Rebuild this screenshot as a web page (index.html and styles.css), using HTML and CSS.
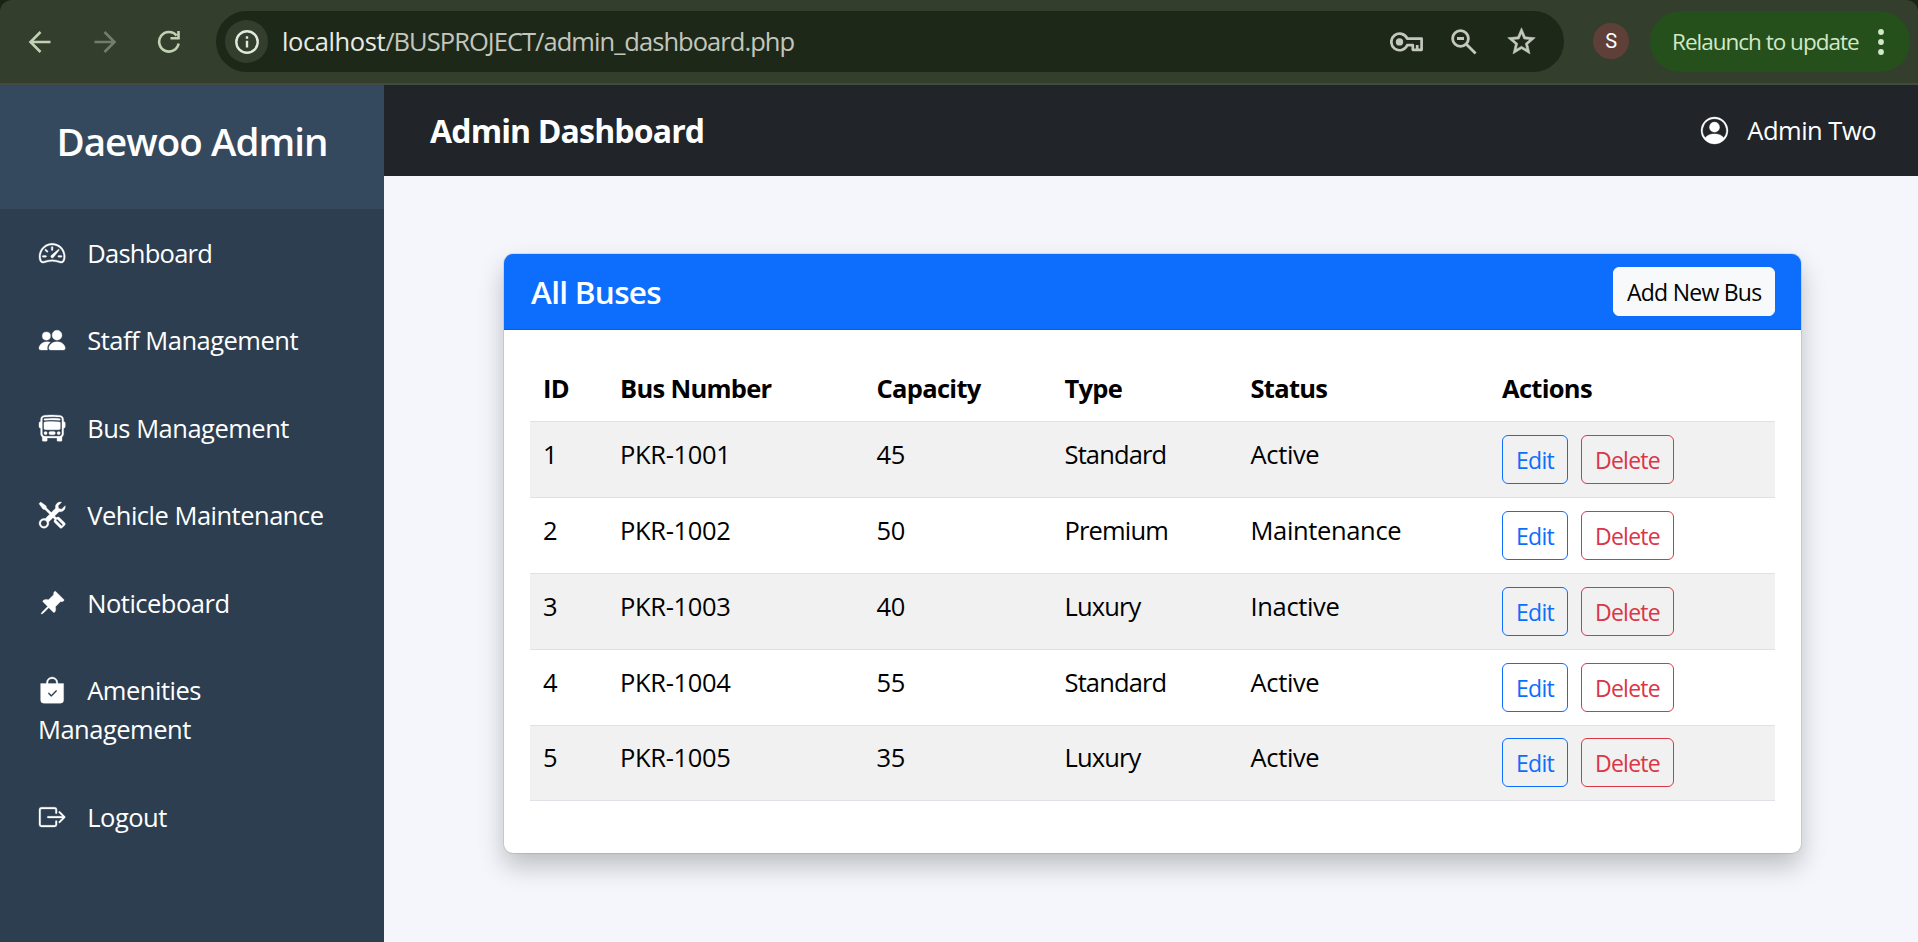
FILE: index.html
```html
<!DOCTYPE html>
<html lang="en">
<head>
<meta charset="utf-8">
<title>Admin Dashboard</title>
<link rel="stylesheet" href="styles.css">
</head>
<body>
<div class="browser">
  <div class="toolbar">
    <div class="nav-buttons">
      <svg class="nav-icon" viewBox="0 0 24 24"><path d="M22.5 12H3M12.5 2 2.5 12l10 10"/></svg>
      <svg class="nav-icon disabled" viewBox="0 0 24 24"><path d="M1.5 12H21M11.5 2l10 10-10 10"/></svg>
      <svg class="nav-icon" viewBox="0 0 24 24"><path d="M21.6 13.5A9.8 9.8 0 1 1 19.6 5.6M13.5 8.2H21.5V1"/></svg>
    </div>
    <div class="omnibox">
      <span class="site-info"><svg class="info-icon" viewBox="0 0 24 24"><circle cx="12" cy="12" r="10.7"/><path d="M12 10.8v6.6M12 6.2v2.6"/></svg></span>
      <span class="url"><span class="host">localhost</span>/BUSPROJECT/admin_dashboard.php</span>
      <svg class="key-icon" viewBox="0 0 34 20"><path d="M17.2 6.6A8.3 8.3 0 1 0 17.2 13.2H22.8V17.8H31.6V6.6Z"/><path d="M27.2 13v4.500"/><circle cx="9.5" cy="9.9" r="3.7"/></svg>
      <svg class="mag-icon" viewBox="0 0 26 26"><circle cx="9.5" cy="9.5" r="7.9"/><path d="M15.3 15.3 24.6 24.6M6 9.5h7"/></svg>
      <svg class="star-icon" viewBox="0 0 24 24"><path d="M22 9.24l-7.19-.62L12 2 9.19 8.63 2 9.24l5.46 4.73L5.82 21 12 17.27 18.18 21l-1.63-7.03L22 9.24zM12 15.4l-3.76 2.27 1-4.28-3.32-2.88 4.38-.38L12 6.1l1.71 4.04 4.38.38-3.32 2.88 1 4.28L12 15.4z"/></svg>
    </div>
    <span class="avatar">S</span>
    <div class="relaunch"><span class="relaunch-text">Relaunch to update</span><svg class="dots" viewBox="0 0 6 28"><circle cx="3" cy="4" r="2.9"/><circle cx="3" cy="14" r="2.9"/><circle cx="3" cy="24" r="2.9"/></svg></div>
  </div>
</div>
<div class="app">
  <aside class="sidebar">
    <h1 class="brand">Daewoo Admin</h1>
    <nav class="menu">
      <a class="item item-dashboard"><svg class="bi" viewBox="0 0 16 16"><path d="M8 4a.5.5 0 0 1 .5.5V6a.5.5 0 0 1-1 0V4.500A.5.5 0 0 1 8 4M3.732 5.732a.5.5 0 0 1 .707 0l.915.914a.5.5 0 1 1-.708.708l-.914-.915a.5.5 0 0 1 0-.707M2 10a.5.5 0 0 1 .5-.5h1.586a.5.5 0 0 1 0 1H2.500A.5.5 0 0 1 2 10m9.500 0a.5.5 0 0 1 .5-.5h1.500a.5.5 0 0 1 0 1H12a.5.5 0 0 1-.5-.5m.754-4.246a.39.39 0 0 0-.527-.02L7.547 9.310a.91.91 0 1 0 1.302 1.258l3.434-4.297a.39.39 0 0 0-.029-.518z"/><path fill-rule="evenodd" d="M0 10a8 8 0 1 1 15.547 2.661c-.442 1.253-1.845 1.602-2.932 1.250C11.309 13.488 9.475 13 8 13c-1.474 0-3.310.488-4.615.911-1.087.352-2.490.003-2.932-1.250A8 8 0 0 1 0 10m8-7a7 7 0 0 0-6.603 9.329c.203.575.923.876 1.680.63C4.397 12.533 6.358 12 8 12s3.604.532 4.923.96c.757.245 1.477-.056 1.680-.631A7 7 0 0 0 8 3"/></svg>Dashboard</a>
      <a class="item"><svg class="bi" viewBox="0 0 16 16"><path d="M7 14s-1 0-1-1 1-4 5-4 5 3 5 4-1 1-1 1zm4-6a3 3 0 1 0 0-6 3 3 0 0 0 0 6m-5.784 6A2.240 2.240 0 0 1 5 13c0-1.355.68-2.750 1.936-3.720A6.300 6.300 0 0 0 5 9c-4 0-5 3-5 4s1 1 1 1zM4.500 8a2.500 2.500 0 1 0 0-5 2.500 2.500 0 0 0 0 5"/></svg>Staff Management</a>
      <a class="item"><svg class="bi" viewBox="0 0 16 16"><path d="M5 11a1 1 0 1 1-2 0 1 1 0 0 1 2 0m8 0a1 1 0 1 1-2 0 1 1 0 0 1 2 0m-6-1a1 1 0 1 0 0 2h2a1 1 0 1 0 0-2zm1-6c-1.876 0-3.426.109-4.552.226A.5.5 0 0 0 3 4.723v3.554a.5.5 0 0 0 .448.497C4.574 8.891 6.124 9 8 9s3.426-.109 4.552-.226A.5.5 0 0 0 13 8.277V4.723a.5.5 0 0 0-.448-.497A44 44 0 0 0 8 4m0-1c-1.837 0-3.353.107-4.448.22a.5.5 0 1 1-.104-.994A44 44 0 0 1 8 2c1.876 0 3.426.109 4.552.226a.5.5 0 1 1-.104.994A43 43 0 0 0 8 3"/><path d="M15 8a1 1 0 0 0 1-1V5a1 1 0 0 0-1-1V2.640c0-1.188-.845-2.232-2.064-2.372A44 44 0 0 0 8 0C5.900 0 4.208.136 3.064.268 1.845.408 1 1.452 1 2.640V4a1 1 0 0 0-1 1v2a1 1 0 0 0 1 1v3.500c0 .818.393 1.544 1 2v2a.5.5 0 0 0 .5.5h2a.5.5 0 0 0 .5-.5V14h6v1.500a.5.5 0 0 0 .5.5h2a.5.5 0 0 0 .5-.5v-2c.607-.456 1-1.182 1-2zM8 1c2.056 0 3.710.134 4.822.261.676.078 1.178.66 1.178 1.379v8.860a1.500 1.500 0 0 1-1.500 1.500h-9A1.500 1.500 0 0 1 2 11.500V2.640c0-.72.502-1.301 1.178-1.379A43 43 0 0 1 8 1"/></svg>Bus Management</a>
      <a class="item"><svg class="bi" viewBox="0 0 16 16"><path d="M1 0 0 1l2.200 3.081a1 1 0 0 0 .815.419h.07a1 1 0 0 1 .708.293l2.675 2.675-2.617 2.654A3.003 3.003 0 0 0 0 13a3 3 0 1 0 5.878-.851l2.654-2.617.968.968-.305.914a1 1 0 0 0 .242 1.023l3.270 3.270a.997.997 0 0 0 1.414 0l1.586-1.586a.997.997 0 0 0 0-1.414l-3.270-3.270a1 1 0 0 0-1.023-.242L10.500 9.500l-.96-.96 2.680-2.643A3.005 3.005 0 0 0 16 3q0-.405-.102-.777l-2.140 2.141L12 4l-.364-1.757L13.777.102a3 3 0 0 0-3.675 3.680L7.462 6.460 4.793 3.793a1 1 0 0 1-.293-.707v-.071a1 1 0 0 0-.419-.814zm9.646 10.646a.5.5 0 0 1 .708 0l2.914 2.915a.5.5 0 0 1-.707.707l-2.915-2.914a.5.5 0 0 1 0-.708M3 11l.471.242.529.026.287.445.445.287.026.529L5 13l-.242.471-.026.529-.445.287-.287.445-.529.026L3 15l-.471-.242L2 14.732l-.287-.445L1.268 14l-.026-.529L1 13l.242-.471.026-.529.445-.287.287-.445.529-.026z"/></svg>Vehicle Maintenance</a>
      <a class="item"><svg class="bi" viewBox="0 0 16 16"><path d="M9.828.722a.5.5 0 0 1 .354.146l4.950 4.950a.5.5 0 0 1 0 .707c-.48.48-1.072.588-1.503.588-.177 0-.335-.018-.46-.039l-3.134 3.134a6 6 0 0 1 .16 1.013c.046.702-.032 1.687-.72 2.375a.5.5 0 0 1-.707 0l-2.829-2.828-3.182 3.182c-.195.195-1.219.902-1.414.707s.512-1.220.707-1.414l3.182-3.182-2.828-2.829a.5.5 0 0 1 0-.707c.688-.688 1.673-.767 2.375-.72a6 6 0 0 1 1.013.16l3.134-3.133a3 3 0 0 1-.04-.461c0-.43.108-1.022.589-1.503a.5.5 0 0 1 .353-.146"/></svg>Noticeboard</a>
      <a class="item"><svg class="bi" viewBox="0 0 16 16"><path fill-rule="evenodd" d="M10.500 3.500a2.500 2.500 0 0 0-5 0V4h5zm1 0V4H15v10a2 2 0 0 1-2 2H3a2 2 0 0 1-2-2V4h3.500v-.5a3.500 3.500 0 1 1 7 0m-.646 5.354a.5.5 0 0 0-.708-.708L7.500 10.793 6.354 9.646a.5.5 0 1 0-.708.708l1.500 1.500a.5.5 0 0 0 .708 0z"/></svg>Amenities<br>Management</a>
      <a class="item"><svg class="bi" viewBox="0 0 16 16"><path d="M10 12.500a.5.5 0 0 1-.5.5h-8a.5.5 0 0 1-.5-.5v-9a.5.5 0 0 1 .5-.5h8a.5.5 0 0 1 .5.5v2a.5.5 0 0 0 1 0v-2A1.500 1.500 0 0 0 9.500 2h-8A1.500 1.500 0 0 0 0 3.500v9A1.500 1.500 0 0 0 1.500 14h8a1.500 1.500 0 0 0 1.500-1.500v-2a.5.5 0 0 0-1 0z"/><path d="M15.854 8.354a.5.5 0 0 0 0-.708l-3-3a.5.5 0 0 0-.708.708L14.293 7.500H5.500a.5.5 0 0 0 0 1h8.793l-2.147 2.146a.5.5 0 0 0 .708.708z"/></svg>Logout</a>
    </nav>
  </aside>
  <div class="content">
    <header class="topbar">
      <span class="page-title">Admin Dashboard</span>
      <span class="user"><svg class="user-icon" viewBox="0 0 16 16"><path d="M11 6a3 3 0 1 1-6 0 3 3 0 0 1 6 0"/><path fill-rule="evenodd" d="M0 8a8 8 0 1 1 16 0A8 8 0 0 1 0 8m8-7a7 7 0 0 0-5.468 11.370C3.242 11.226 4.805 10 8 10s4.757 1.225 5.468 2.370A7 7 0 0 0 8 1"/></svg><span class="user-name">Admin Two</span></span>
    </header>
    <main class="main">
      <section class="card">
        <div class="card-header"><h2 class="card-title">All Buses</h2><button class="btn btn-light">Add New Bus</button></div>
        <div class="card-body">
          <table class="table">
            <colgroup><col class="c-id"><col class="c-number"><col class="c-capacity"><col class="c-type"><col class="c-status"><col></colgroup>
            <thead><tr><th>ID</th><th>Bus Number</th><th>Capacity</th><th>Type</th><th>Status</th><th>Actions</th></tr></thead>
            <tbody>
              <tr><td>1</td><td>PKR-1001</td><td>45</td><td class="type">Standard</td><td>Active</td><td><div class="actions"><button class="btn btn-edit">Edit</button><button class="btn btn-delete">Delete</button></div></td></tr>
              <tr><td>2</td><td>PKR-1002</td><td>50</td><td class="type">Premium</td><td>Maintenance</td><td><div class="actions"><button class="btn btn-edit">Edit</button><button class="btn btn-delete">Delete</button></div></td></tr>
              <tr><td>3</td><td>PKR-1003</td><td>40</td><td class="type">Luxury</td><td>Inactive</td><td><div class="actions"><button class="btn btn-edit">Edit</button><button class="btn btn-delete">Delete</button></div></td></tr>
              <tr><td>4</td><td>PKR-1004</td><td>55</td><td class="type">Standard</td><td>Active</td><td><div class="actions"><button class="btn btn-edit">Edit</button><button class="btn btn-delete">Delete</button></div></td></tr>
              <tr><td>5</td><td>PKR-1005</td><td>35</td><td class="type">Luxury</td><td>Active</td><td><div class="actions"><button class="btn btn-edit">Edit</button><button class="btn btn-delete">Delete</button></div></td></tr>
            </tbody>
          </table>
        </div>
      </section>
    </main>
  </div>
</div>
</body>
</html>
```
FILE: styles.css
```css
* { box-sizing: border-box; }
body {
  margin: 0;
  height: 942px;
  overflow: hidden;
  font-family: "Open Sans", "Noto Sans", sans-serif;
  font-size: 25.5px;
  line-height: 39.4px;
  letter-spacing: -0.4px;
}
h1, h2 { margin: 0; }

/* browser bar */
.browser { background: #1a2416; }
.toolbar {
  display: flex;
  align-items: center;
  height: 85px;
  padding: 0 8px 0 28px;
  background: #343e2d;
  border-bottom: 2px solid #434a3e;
  border-radius: 12px 12px 0 0;
}
.nav-buttons { display: flex; gap: 40.5px; width: 188px; }
.nav-icon { width: 24px; height: 24px; fill: none; stroke: #c0d2b2; stroke-width: 2.6; }
.nav-icon.disabled { stroke: #737d6b; }
.omnibox {
  display: flex;
  align-items: center;
  width: 1348px;
  height: 61px;
  padding: 0 26px 0 9px;
  border-radius: 31px;
  background: #1e2819;
}
.site-info {
  display: flex;
  align-items: center;
  justify-content: center;
  width: 43px;
  height: 43px;
  margin-right: 14px;
  border-radius: 50%;
  background: #343e2d;
}
.info-icon { width: 24px; height: 24px; fill: none; stroke: #e3e8de; stroke-width: 2.4; }
.url { flex: 1; color: #c3c6bd; white-space: nowrap; letter-spacing: -0.96px; }
.host { color: #e8ebe4; letter-spacing: -0.4px; }
.key-icon { width: 34px; height: 20px; margin-right: 27px; fill: none; stroke: #c3c8bd; stroke-width: 2.7; stroke-linejoin: round; }
.key-icon circle { fill: #c3c8bd; stroke: none; }
.mag-icon { width: 26px; height: 26px; margin-right: 28px; fill: none; stroke: #c3c8bd; stroke-width: 2.8; }
.star-icon { width: 33px; height: 33px; fill: #c3c8bd; stroke: #c3c8bd; stroke-width: .4; }
.avatar {
  width: 36px;
  height: 36px;
  margin: -1px 21px 0 29px;
  border-radius: 50%;
  background: #5f4038;
  color: #fff;
  font: 20px/36px Roboto, sans-serif;
  text-align: center;
}
.relaunch {
  display: flex;
  align-items: center;
  justify-content: space-between;
  width: 260px;
  height: 61px;
  padding: 0 26px 0 22px;
  border-radius: 31px;
  background: #25501b;
  color: #d2e8c8;
  font-size: 22.5px;
  letter-spacing: -1px;
  white-space: nowrap;
}
.dots { width: 6px; height: 28px; fill: #d2e8c8; }

/* page shell */
.app { display: flex; height: 857px; }
.sidebar { flex: none; width: 384px; background: #2c3e50; color: #fff; }
.brand {
  height: 124px;
  padding-top: 32px;
  background: #34495e;
  font-size: 38.5px;
  font-weight: 600;
  line-height: 48px;
  letter-spacing: -0.95px;
  text-align: center;
}
.menu { padding-top: 1px; }
.item { display: block; padding: 24px 38px; letter-spacing: -0.5px; }
.item-dashboard { letter-spacing: -0.75px; }
.bi {
  width: 26.25px;
  height: 26.25px;
  margin: 0 22.5px 0 .5px;
  vertical-align: -3.3px;
  fill: #fff;
  stroke: #fff;
  stroke-width: .2;
  overflow: visible;
}
.content { flex: 1; display: flex; flex-direction: column; background: #f4f6fb; }
.topbar {
  display: flex;
  align-items: center;
  justify-content: space-between;
  height: 91px;
  padding: 1px 42px 0 46px;
  background: #212529;
  color: #fff;
}
.page-title { font-size: 32px; font-weight: 700; letter-spacing: -0.85px; }
.user { display: flex; align-items: center; letter-spacing: -0.5px; }
.user-icon { width: 27px; height: 27px; margin: -2px 19px 0 0; fill: #fff; stroke: #fff; stroke-width: .2; overflow: visible; }

/* bus list */
.main { padding: 78px 117px 0 120px; }
.card {
  height: 599px;
  border-radius: 9px;
  background: #fff;
  box-shadow: 0 0 0 1px rgba(0, 0, 0, .09), 0 13px 26px rgba(0, 0, 0, .23);
}
.card-header {
  display: flex;
  align-items: center;
  justify-content: space-between;
  height: 76px;
  padding: 0 26px 0 27px;
  border-bottom: 1px solid #0b5ed7;
  border-radius: 9px 9px 0 0;
  background: #0d6efd;
  color: #fff;
}
.card-title { font-size: 31.5px; font-weight: 600; letter-spacing: -0.7px; }
.btn {
  height: 49px;
  padding: 1px 13px 0;
  border: 1px solid;
  border-radius: 6px;
  background: none;
  font: 23px/46px "Open Sans", "Noto Sans", sans-serif;
  letter-spacing: -0.75px;
  white-space: nowrap;
}
.btn-light { width: 162px; background: #f8f9fa; border-color: #f8f9fa; color: #000; }
.btn-edit { width: 66px; color: #0d6efd; }
.btn-delete { width: 93px; color: #dc3545; }
.card-body { padding: 26px; }
.table { width: 1245px; table-layout: fixed; border-spacing: 0; border-collapse: separate; color: #000; }
.c-id { width: 77px; }
.c-number { width: 256.5px; }
.c-capacity { width: 188px; }
.c-type { width: 186px; }
.c-status { width: 251.5px; }
th, td { padding: 13px 13px 0; border-bottom: 1px solid #dee2e6; text-align: left; vertical-align: top; }
th { height: 66px; font-weight: 700; letter-spacing: -0.7px; }
td { height: 76px; letter-spacing: -0.35px; }
.type { letter-spacing: -0.85px; }
tbody tr:last-child td { height: 75px; padding-top: 12px; }
tbody tr:nth-child(odd) { background: #f1f1f1; }
.actions { display: flex; gap: 13px; }
```
